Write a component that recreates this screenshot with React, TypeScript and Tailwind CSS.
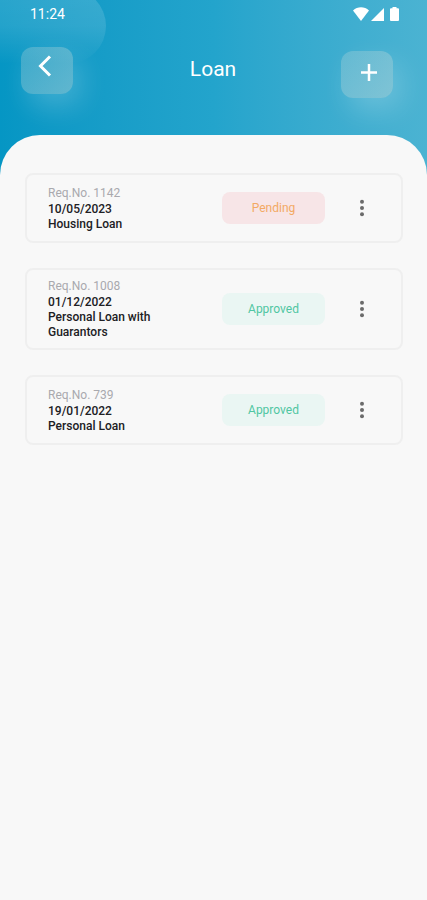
import React from "react";

type Status = "Pending" | "Approved";

interface LoanRequest {
  id: number;
  date: string;
  title: string;
  status: Status;
}

const requests: LoanRequest[] = [
  { id: 1142, date: "10/05/2023", title: "Housing Loan", status: "Pending" },
  { id: 1008, date: "01/12/2022", title: "Personal Loan with Guarantors", status: "Approved" },
  { id: 739, date: "19/01/2022", title: "Personal Loan", status: "Approved" },
];

const badgeStyles: Record<Status, string> = {
  Pending: "bg-[#f7e5e7] text-[#f3a964]",
  Approved: "bg-[#eaf6f3] text-[#50c6a2]",
};

function StatusBar() {
  return (
    <div className="flex h-7 items-center justify-between pr-7 pl-[30px]">
      <span className="text-sm">11:24</span>
      <div className="flex items-center gap-[2px]">
        <svg width="16" height="14" viewBox="0 0 16 14" fill="currentColor" aria-hidden="true">
          <path d="M0 3.4C4.5-.8 11.500-.8 16 3.400L8 14z" />
        </svg>
        <svg width="13" height="13" viewBox="0 0 13 13" fill="currentColor" aria-hidden="true">
          <path d="M13 0v13H0z" />
        </svg>
        <svg className="ml-1" width="9" height="14" viewBox="0 0 9 14" fill="currentColor" aria-hidden="true">
          <path d="M2.500 0h4v1.200H8q1 0 1 1V13q0 1-1 1H1q-1 0-1-1V2.200q0-1 1-1h1.500z" />
        </svg>
      </div>
    </div>
  );
}

function Header() {
  return (
    <header className="relative h-44 overflow-hidden bg-linear-to-r from-[#0596c4] via-[#23a4cc] to-[#4bb3d2] text-white">
      <div className="absolute -top-3 -left-8 h-[76px] w-[138px] rounded-[38px] bg-linear-to-b from-white/15 via-white/12 to-white/0" />
      <div className="relative">
        <StatusBar />
        <div className="grid grid-cols-[1fr_auto_1fr] items-start pt-[19px] pr-[34px] pl-[21px]">
          <button
            type="button"
            aria-label="Back"
            className="flex h-[47px] w-[52px] items-start justify-center rounded-xl bg-linear-to-br from-[#d5e0dc]/25 to-[#d5e0dc]/40 pt-2 pr-1 shadow-[8px_12px_28px_rgba(255,255,255,0.2)]"
          >
            <svg width="14" height="22" viewBox="0 0 14 22" fill="none" stroke="currentColor" strokeWidth="3" aria-hidden="true">
              <path d="M12 1.500 2.500 11l9.500 9.500" />
            </svg>
          </button>
          <h1 className="pt-2 pl-3 text-[21px] leading-7">Loan</h1>
          <button
            type="button"
            aria-label="Add loan request"
            className="mt-1 flex h-[47px] w-[52px] items-start justify-center justify-self-end rounded-xl bg-linear-to-br from-[#d5e0dc]/25 to-[#d5e0dc]/40 pt-[13px] pl-1 shadow-[8px_12px_28px_rgba(255,255,255,0.2)]"
          >
            <svg width="16" height="17" viewBox="0 0 16 17" fill="none" stroke="currentColor" strokeWidth="2.500" aria-hidden="true">
              <path d="M8 0v17M0 8.500h16" />
            </svg>
          </button>
        </div>
      </div>
    </header>
  );
}

function LoanCard({ request }: { request: LoanRequest }) {
  return (
    <li className="flex min-h-[70px] items-center rounded-lg border-2 border-[#efefef] py-2 pr-[27px] pl-[21px]">
      <div className="min-w-0 flex-1">
        <p className="text-xs leading-[17px] text-[#a9a9ae]">Req.No. {request.id}</p>
        <p className="text-xs leading-[15px] font-medium text-[#202024]">{request.date}</p>
        <h2 className="max-w-[120px] text-xs leading-[15px] font-medium text-[#202024]">{request.title}</h2>
      </div>
      <span
        className={`flex h-8 w-[103px] items-center justify-center rounded-lg text-xs ${badgeStyles[request.status]}`}
      >
        {request.status}
      </span>
      <button
        type="button"
        aria-label={`Options for request ${request.id}`}
        className="ml-[25px] flex h-8 w-6 items-center justify-center text-[#6b6b6b]"
      >
        <svg width="4" height="18" viewBox="0 0 4 18" fill="currentColor" aria-hidden="true">
          <circle cx="2" cy="2.700" r="2" />
          <circle cx="2" cy="9" r="2" />
          <circle cx="2" cy="15.300" r="2" />
        </svg>
      </button>
    </li>
  );
}

export default function App() {
  return (
    <div className="flex min-h-screen flex-col bg-[#f8f8f8] font-[Roboto,sans-serif]">
      <Header />
      <main className="relative -mt-[41px] flex-1 rounded-t-[40px] bg-[#f8f8f8] pt-[38px] pr-6 pb-6 pl-[25px]">
        <ul className="flex flex-col gap-[25px]">
          {requests.map((request) => (
            <LoanCard key={request.id} request={request} />
          ))}
        </ul>
      </main>
    </div>
  );
}
